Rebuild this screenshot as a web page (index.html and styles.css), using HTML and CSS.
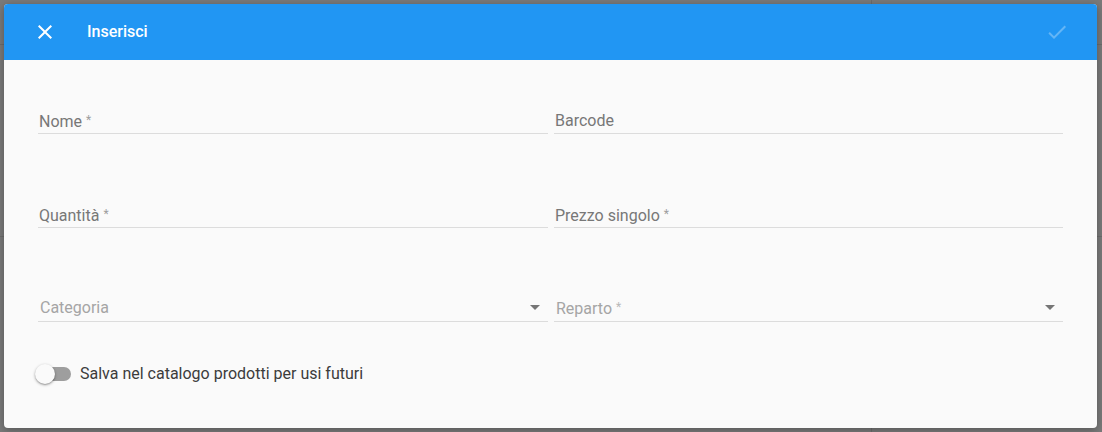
FILE: index.html
```html
<!DOCTYPE html>
<html lang="it">
<head>
<meta charset="utf-8">
<title>Inserisci</title>
<link rel="stylesheet" href="styles.css">
</head>
<body>
<div class="dialog">
  <header class="bar">
    <button class="icon-btn close" aria-label="Chiudi">
      <svg viewBox="0 0 24 24" width="24" height="24"><path d="M19 6.41L17.590 5 12 10.59 6.41 5 5 6.41 10.59 12 5 17.59 6.41 19 12 13.41 17.59 19 19 17.59 13.41 12z" fill="#fff"/></svg>
    </button>
    <h1 class="title">Inserisci</h1>
    <button class="icon-btn check" aria-label="Conferma">
      <svg viewBox="0 0 24 24" width="24" height="24"><path d="M9 16.17L4.83 12l-1.42 1.41L9 19 21 7l-1.41-1.41z" fill="#fff"/></svg>
    </button>
  </header>
  <main class="content">
    <div class="grid">
      <div class="field"><span class="label">Nome <span class="req">*</span></span></div>
      <div class="field"><span class="label">Barcode</span></div>
      <div class="field"><span class="label">Quantità <span class="req">*</span></span></div>
      <div class="field"><span class="label">Prezzo singolo <span class="req">*</span></span></div>
      <div class="field select"><span class="label dim">Categoria</span><span class="arrow"></span></div>
      <div class="field select"><span class="label dim">Reparto <span class="req">*</span></span><span class="arrow"></span></div>
    </div>
    <label class="toggle-row">
      <span class="toggle"><span class="track"></span><span class="thumb"></span></span>
      <span class="toggle-text">Salva nel catalogo prodotti per usi futuri</span>
    </label>
  </main>
</div>
</body>
</html>
```

FILE: styles.css
```css
* { box-sizing: border-box; }
html, body { margin: 0; padding: 0; }
body {
  width: 1102px;
  height: 432px;
  overflow: hidden;
  font-family: Roboto, "Liberation Sans", sans-serif;
  background-color: #7a7a7a;
  background-image:
    linear-gradient(to bottom, transparent 44px, #6c6c6c 44px, #6c6c6c 45px, transparent 45px),
    linear-gradient(to bottom, transparent 236px, #6c6c6c 236px, #6c6c6c 237px, transparent 237px),
    linear-gradient(to right, transparent 871px, #6c6c6c 871px, #6c6c6c 872px, transparent 872px);
  padding: 4px 5px 4px 4px;
}
.dialog {
  width: 1093px;
  height: 424px;
  background: #fafafa;
  border-radius: 4px;
  overflow: hidden;
  box-shadow: 0 2px 8px rgba(0,0,0,0.3);
  display: flex;
  flex-direction: column;
}
.bar {
  height: 56px;
  background: #2196f3;
  display: flex;
  align-items: center;
  padding: 0 28px 0 29px;
  flex: none;
}
.icon-btn {
  border: 0;
  background: none;
  padding: 0;
  width: 24px;
  height: 24px;
  display: flex;
  cursor: pointer;
}
.icon-btn svg { display: block; }
.check { margin-left: auto; opacity: 0.3; }
.title {
  margin: 0 0 0 30px;
  font-size: 16px;
  font-weight: 500;
  color: #fff;
  line-height: 20px;
}
.content {
  padding: 51px 34px 0 34px;
}
.grid {
  display: grid;
  grid-template-columns: 510px 509px;
  column-gap: 6px;
  row-gap: 71px;
}
.field {
  display: flex;
  align-items: center;
  height: 23px;
  padding: 0 1px 3px 1px;
  border-bottom: 1px solid #dcdcdc;
}
.field.select { padding-bottom: 5px; }
.label {
  font-size: 16px;
  line-height: 20px;
  color: #777;
}
.label.dim { color: #a5a5a5; padding-left: 1px; }
.req { font-size: 12px; vertical-align: 3px; color: #9e9e9e; }
.label.dim .req { color: #b8b8b8; }
.arrow {
  margin-left: auto;
  margin-right: 7px;
  width: 0;
  height: 0;
  border-left: 5px solid transparent;
  border-right: 5px solid transparent;
  border-top: 5px solid #757575;
}
.toggle-row {
  display: flex;
  align-items: center;
  margin-top: 40px;
  margin-left: -3px;
  height: 24px;
}
.toggle {
  position: relative;
  width: 36px;
  height: 20px;
  display: block;
  flex: none;
}
.track {
  position: absolute;
  left: 2px;
  top: 3px;
  width: 34px;
  height: 14px;
  border-radius: 7px;
  background: #9e9e9e;
}
.thumb {
  position: absolute;
  left: 0;
  top: 0;
  width: 20px;
  height: 20px;
  border-radius: 50%;
  background: #fafafa;
  box-shadow: 0 1px 3px rgba(0,0,0,0.35), 0 1px 1px rgba(0,0,0,0.14);
}
.toggle-text {
  margin-left: 9px;
  font-size: 16px;
  line-height: 20px;
  color: #3c3c3c;
}
```
